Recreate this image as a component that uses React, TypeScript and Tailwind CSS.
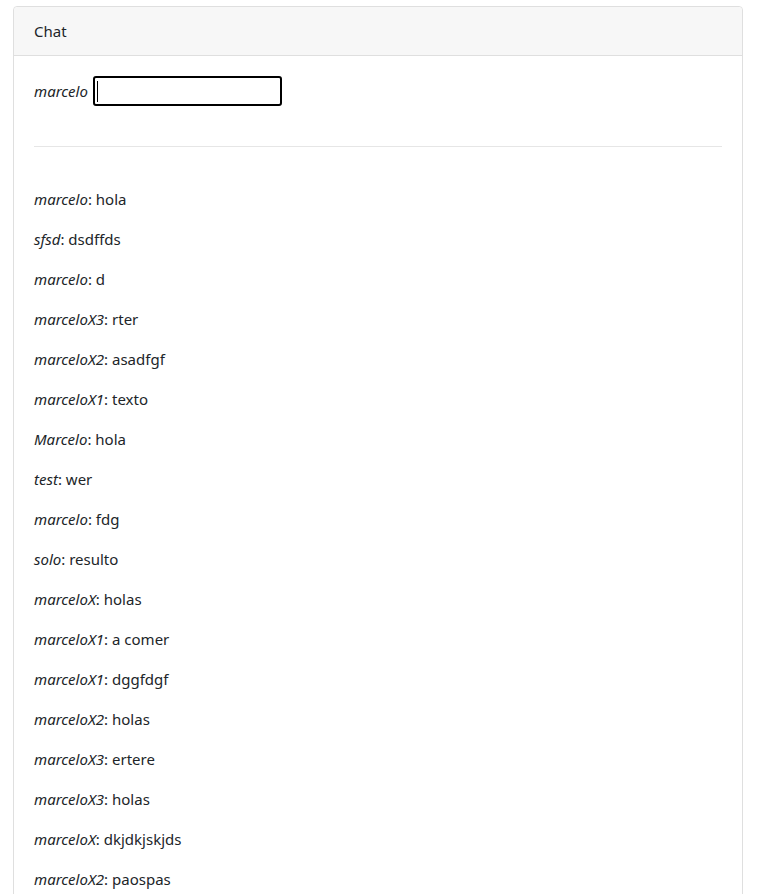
const messages: [string, string][] = [
  ['marcelo', 'hola'],
  ['sfsd', 'dsdffds'],
  ['marcelo', 'd'],
  ['marceloX3', 'rter'],
  ['marceloX2', 'asadfgf'],
  ['marceloX1', 'texto'],
  ['Marcelo', 'hola'],
  ['test', 'wer'],
  ['marcelo', 'fdg'],
  ['solo', 'resulto'],
  ['marceloX', 'holas'],
  ['marceloX1', 'a comer'],
  ['marceloX1', 'dggfdgf'],
  ['marceloX2', 'holas'],
  ['marceloX3', 'ertere'],
  ['marceloX3', 'holas'],
  ['marceloX', 'dkjdkjskjds'],
  ['marceloX2', 'paospas'],
];

const App: React.FC = () => {
  return (
    <div className="h-[894px] overflow-hidden bg-white pt-[6px] pl-[13px] font-['Noto_Sans',sans-serif] text-[15px] leading-6 text-[#212529]">
      <div className="w-[730px] rounded-[4px] border border-[#dfdfdf]">
        <div className="rounded-t-[4px] border-b border-[#dfdfdf] bg-[#f7f7f7] px-5 py-3">Chat</div>
        <div className="px-5 pt-5">
          <div className="flex h-[30px] items-center gap-[5px]">
            <em>marcelo</em>
            <div className="relative h-[30px] w-[189px] rounded-[3px] border-2 border-black bg-white">
              <span className="absolute top-[3px] left-[2px] h-[21px] w-px bg-black" />
            </div>
          </div>
          <hr className="mt-10 mb-10 border-t border-[#e6e6e6]" />
          {messages.map(([user, text], i) => (
            <p key={i} className="mb-4">
              <em>{user}</em>: {text}
            </p>
          ))}
        </div>
      </div>
    </div>
  );
};

export default App;
